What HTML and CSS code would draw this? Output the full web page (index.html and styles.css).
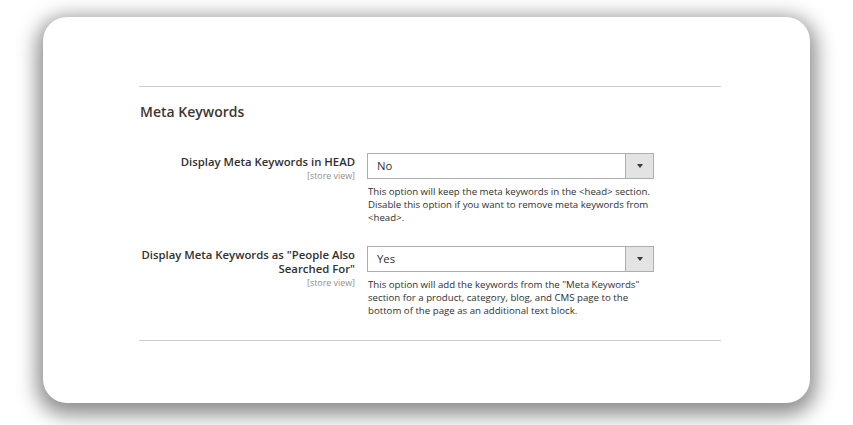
FILE: index.html
```html
<!DOCTYPE html>
<html lang="en">
<head>
<meta charset="utf-8">
<title>Meta Keywords</title>
<link rel="stylesheet" href="styles.css">
</head>
<body>
<div class="card">
  <section class="fieldset">
    <h2 class="fieldset-title">Meta Keywords</h2>
    <div class="field">
      <div class="field-label">
        <span class="label-text">Display Meta Keywords in HEAD</span>
        <span class="scope">[store view]</span>
      </div>
      <div class="field-control">
        <div class="select">
          <span class="select-value">No</span>
          <span class="select-toggle"><span class="caret"></span></span>
        </div>
        <p class="note">This option will keep the meta keywords in the &lt;head&gt; section. Disable this option if you want to remove meta keywords from &lt;head&gt;.</p>
      </div>
    </div>
    <div class="field">
      <div class="field-label">
        <span class="label-text">Display Meta Keywords as "People Also Searched For"</span>
        <span class="scope">[store view]</span>
      </div>
      <div class="field-control">
        <div class="select">
          <span class="select-value">Yes</span>
          <span class="select-toggle"><span class="caret"></span></span>
        </div>
        <p class="note">This option will add the keywords from the "Meta Keywords" section for a product, category, blog, and CMS page to the bottom of the page as an additional text block.</p>
      </div>
    </div>
  </section>
</div>
</body>
</html>
```

FILE: styles.css
```css
html, body {
  margin: 0;
  padding: 0;
  background: #ffffff;
}

body {
  font-family: "Open Sans", "Liberation Sans", sans-serif;
  color: #303030;
  padding: 17px 43px 22px 43px;
}

.card {
  width: 767px;
  height: 386px;
  box-sizing: border-box;
  background: #ffffff;
  border-radius: 24px;
  box-shadow: 0 6px 20px 6px rgba(0, 0, 0, 0.45);
  padding: 69px 89px 0 96px;
}

.fieldset {
  border-top: 1px solid #cccccc;
  border-bottom: 1px solid #cccccc;
  padding: 0 0 23px 0;
}

.fieldset-title {
  margin: 16px 0 32px 1px;
  font-size: 14px;
  line-height: 18px;
  font-weight: 600;
  color: #41362f;
}

.field {
  display: grid;
  grid-template-columns: 216px 287px;
  column-gap: 12px;
  margin-bottom: 22px;
}

.field:last-child {
  margin-bottom: 0;
}

.field-label {
  display: flex;
  flex-direction: column;
  align-items: flex-end;
  text-align: right;
  padding-top: 2px;
}

.label-text {
  font-size: 11.35px;
  line-height: 14px;
  font-weight: 600;
  color: #303030;
}

.scope {
  margin-top: 1px;
  font-size: 8.9px;
  line-height: 11px;
  color: #8f8f8f;
}

.select {
  display: flex;
  height: 26px;
  box-sizing: border-box;
  border: 1px solid #adadad;
  background: #ffffff;
}

.select-value {
  flex: 1;
  padding-left: 9px;
  font-size: 11.3px;
  line-height: 24px;
  color: #303030;
}

.select-toggle {
  width: 27px;
  border-left: 1px solid #adadad;
  background: #e3e3e3;
  display: flex;
  align-items: center;
  justify-content: center;
}

.caret {
  width: 0;
  height: 0;
  border-left: 3px solid transparent;
  border-right: 3px solid transparent;
  border-top: 4px solid #41362f;
}

.note {
  margin: 6px 0 0 1px;
  font-size: 9.67px;
  line-height: 13px;
  color: #303030;
}
```
